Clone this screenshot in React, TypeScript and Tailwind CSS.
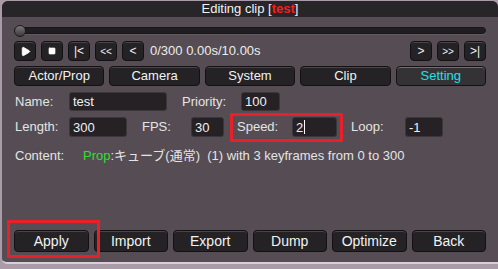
import { Play, Square } from 'lucide-react';

const base =
  'flex items-center justify-center rounded-[4px] border border-[#131113]';
const btn = `${base} bg-[#242224] shadow-[inset_0_1px_0_rgba(255,255,255,0.16)] text-[#f2f2f2]`;
const activeBtn = `${base} bg-[#353236] shadow-[inset_0_1px_0_rgba(255,255,255,0.3)] text-[#1ee0e8]`;
const input =
  'h-full rounded-[3px] bg-[#252124] border border-[#3b363a] text-[13px] leading-none text-[#f0f0f0] pl-[3px] flex items-center';

const tabs = ['Actor/Prop', 'Camera', 'System', 'Clip', 'Setting'];
const actions = ['Apply', 'Import', 'Export', 'Dump', 'Optimize', 'Back'];

export default function App() {
  return (
    <div className="relative w-[498px] h-[269px] bg-[#a99ba7] pt-px pl-[2px] overflow-hidden font-['Liberation_Sans','Noto_Sans_CJK_JP',sans-serif]">
      <div className="w-[496px] h-[263px] rounded-t-[6px] rounded-bl-[5px] bg-[#554d53] border-b-2 border-[#d8d0d6] flex flex-col overflow-hidden">
        <div className="h-[16px] bg-[#272527] text-center text-[13px] leading-[16px] text-[#f2f2f2]">
          Editing clip [<span className="font-bold text-[#ff1a1a]">test</span>]
        </div>

        <div className="flex-1 flex flex-col px-[12px] pb-[10px] text-[13px] text-[#e4e4e4]">
          {/* timeline slider */}
          <div className="relative mt-[8px] h-[12px]">
            <div className="mt-[2px] h-[7px] w-full rounded-full bg-[#201e20] border border-[#181618] shadow-[0_1px_0_rgba(255,255,255,0.08)]" />
            <div className="absolute left-0 top-0 w-[12px] h-[12px] rounded-full bg-gradient-to-b from-[#7a767a] to-[#3e3b3e] border border-[#1c1a1c]" />
          </div>

          {/* transport */}
          <div className="mt-[4px] h-[20px] flex items-center gap-[5px]">
            <div className={`${btn} w-[22px] h-[20px]`}>
              <Play className="w-[11px] h-[11px] fill-white stroke-white" />
            </div>
            <div className={`${btn} w-[22px] h-[20px]`}>
              <Square className="w-[8px] h-[8px] fill-white stroke-white" />
            </div>
            <div className={`${btn} w-[22px] h-[20px] text-[12px]`}>|&lt;</div>
            <div className={`${btn} w-[22px] h-[20px] text-[10px]`}>&lt;&lt;</div>
            <div className={`${btn} w-[22px] h-[20px] text-[12px]`}>&lt;</div>
            <span className="ml-[1px] text-[13px] text-[#ececec]">0/300 0.00s/10.00s</span>
            <div className="ml-auto flex gap-[5px]">
              <div className={`${btn} w-[22px] h-[20px] text-[12px]`}>&gt;</div>
              <div className={`${btn} w-[22px] h-[20px] text-[10px]`}>&gt;&gt;</div>
              <div className={`${btn} w-[22px] h-[20px] text-[12px]`}>&gt;|</div>
            </div>
          </div>

          {/* tabs */}
          <div className="mt-[5px] h-[20px] flex gap-[5px]">
            {tabs.map((t) => (
              <div key={t} className={`${t === 'Setting' ? activeBtn : btn} flex-1 h-[20px] text-[13px]`}>
                {t}
              </div>
            ))}
          </div>

          {/* name row */}
          <div className="mt-[6px] h-[19px] flex items-center">
            <span className="w-[55px] pl-[1px]">Name:</span>
            <div className={`${input} w-[98px]`}>test</div>
            <span className="w-[74px] pl-[15px]">Priority:</span>
            <div className={`${input} w-[39px]`}>100</div>
          </div>

          {/* length row */}
          <div className="mt-[6px] h-[20px] flex items-center">
            <span className="w-[55px] pl-[1px]">Length:</span>
            <div className={`${input} w-[58px]`}>300</div>
            <span className="w-[64px] pl-[15px]">FPS:</span>
            <div className={`${input} w-[33px]`}>30</div>
            <span className="w-[68px] pl-[13px]">Speed:</span>
            <div className={`${input} w-[45px]`}>
              2<span className="ml-px h-[14px] border-r border-white" />
            </div>
            <span className="w-[68px] pl-[14px]">Loop:</span>
            <div className={`${input} w-[38px]`}>-1</div>
          </div>

          {/* content */}
          <div className="mt-[11px] h-[16px] leading-[16px] flex whitespace-pre">
            <span className="w-[69px] pl-[1px]">Content:</span>
            <span>
              <span className="text-[#2ee02e]">Prop</span>:キューブ(通常)  (1) with 3 keyframes from 0 to 300
            </span>
          </div>

          {/* actions */}
          <div className="mt-auto h-[22px] flex gap-[5px]">
            {actions.map((a) => (
              <div key={a} className={`${btn} flex-1 h-[22px] text-[14px]`}>
                {a}
              </div>
            ))}
          </div>
        </div>
      </div>

      {/* annotation boxes */}
      <div className="absolute left-[230px] top-[113px] w-[113px] h-[29px] border-[3px] border-[#e8202a]" />
      <div className="absolute left-[7px] top-[220px] w-[93px] h-[38px] border-[3px] border-[#e8202a]" />
    </div>
  );
}
